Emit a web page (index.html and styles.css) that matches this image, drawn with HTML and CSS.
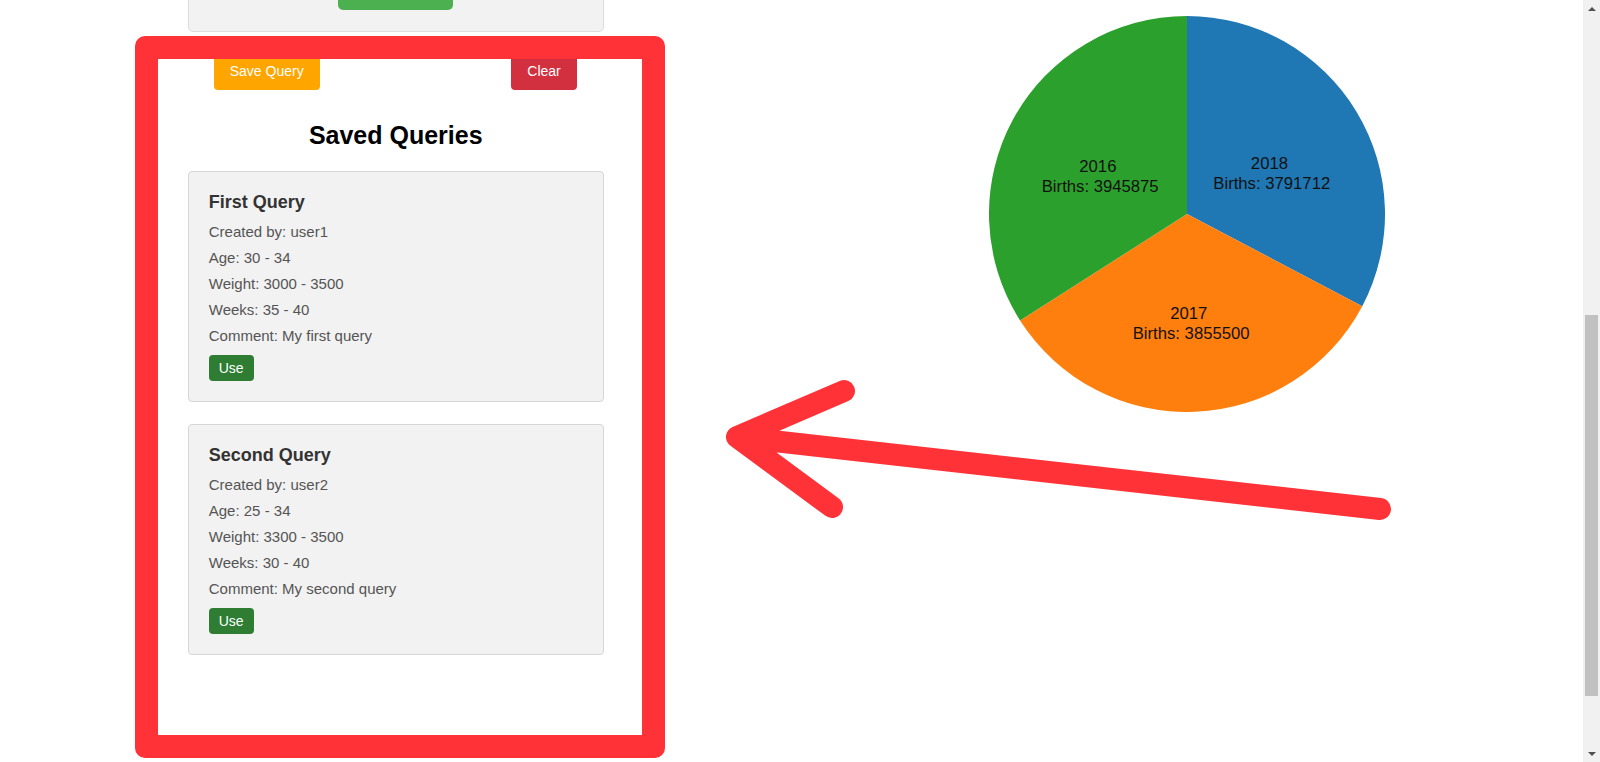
FILE: index.html
```html
<!DOCTYPE html>
<html lang="en">
<head>
<meta charset="utf-8">
<title>Saved Queries</title>
<link rel="stylesheet" href="styles.css">
</head>
<body>
  <div class="page">
    <div class="columns">
      <section class="left-col">
        <div class="panel">
          <div class="form-card">
            <button class="btn btn-submit" aria-label="Search"></button>
          </div>

          <div class="actions">
            <button class="btn btn-save">Save Query</button>
            <button class="btn btn-clear">Clear</button>
          </div>

          <h2 class="saved-title">Saved Queries</h2>

          <div class="query-card">
            <h3 class="query-name">First Query</h3>
            <p class="query-line">Created by: user1</p>
            <p class="query-line">Age: 30 - 34</p>
            <p class="query-line">Weight: 3000 - 3500</p>
            <p class="query-line">Weeks: 35 - 40</p>
            <p class="query-line">Comment: My first query</p>
            <button class="btn btn-use">Use</button>
          </div>

          <div class="query-card">
            <h3 class="query-name">Second Query</h3>
            <p class="query-line">Created by: user2</p>
            <p class="query-line">Age: 25 - 34</p>
            <p class="query-line">Weight: 3300 - 3500</p>
            <p class="query-line">Weeks: 30 - 40</p>
            <p class="query-line">Comment: My second query</p>
            <button class="btn btn-use">Use</button>
          </div>
        </div>
      </section>

      <section class="right-col">
        <svg class="pie" width="396" height="396" viewBox="0 0 396 396">
          <path d="M198,198 L198,0 A198,198 0 0,1 373.24,290.17 Z" fill="#1f77b4"/>
          <path d="M198,198 L373.24,290.17 A198,198 0 0,1 31.06,304.48 Z" fill="#ff7f0e"/>
          <path d="M198,198 L31.06,304.48 A198,198 0 0,1 198,0 Z" fill="#2ca02c"/>
          <text class="pie-label" x="282.75" y="146.82">
            <tspan x="282.75" dy="0.35em">2018</tspan>
            <tspan x="282.75" dy="1.2em">Births: 3791712</tspan>
          </text>
          <text class="pie-label" x="202.13" y="296.91">
            <tspan x="202.13" dy="0.35em">2017</tspan>
            <tspan x="202.13" dy="1.2em">Births: 3855500</tspan>
          </text>
          <text class="pie-label" x="111.19" y="150.4">
            <tspan x="111.19" dy="0.35em">2016</tspan>
            <tspan x="111.19" dy="1.2em">Births: 3945875</tspan>
          </text>
        </svg>
      </section>
    </div>

    <div class="highlight-frame"></div>

    <svg class="annotation" width="1583" height="762" viewBox="0 0 1583 762">
      <path d="M844,391 L737,437 L832,507 M737,437 L1380,509" fill="none" stroke="#ff3237" stroke-width="22" stroke-linecap="round" stroke-linejoin="round"/>
    </svg>
  </div>

  <div class="scrollbar">
    <div class="sb-btn"><span class="sb-arrow-up"></span></div>
    <div class="sb-track">
      <div class="sb-thumb"></div>
    </div>
    <div class="sb-btn"><span class="sb-arrow-down"></span></div>
  </div>
</body>
</html>
```

FILE: styles.css
```css
* {
  box-sizing: border-box;
}

html, body {
  margin: 0;
  padding: 0;
  height: 762px;
  overflow: hidden;
  background: #ffffff;
  font-family: "Liberation Sans", Arial, sans-serif;
}

body {
  display: flex;
}

.page {
  position: relative;
  flex: 1;
  height: 762px;
  overflow: hidden;
}

.columns {
  display: grid;
  grid-template-columns: 1fr 1fr;
  height: 100%;
}

.left-col {
  display: flex;
  justify-content: center;
}

.panel {
  width: 416px;
}

.form-card {
  margin-top: -49px;
  padding: 20px 20px 21px;
  background: #f2f2f2;
  border: 1px solid #dcdcdc;
  border-radius: 5px;
  display: flex;
  justify-content: center;
}

.btn {
  font-family: "Liberation Sans", Arial, sans-serif;
  font-size: 14px;
  line-height: 16px;
  color: #ffffff;
  border: none;
  border-radius: 4px;
  cursor: pointer;
}

.btn-submit {
  width: 115px;
  height: 38px;
  background: #4caf50;
  border-radius: 5px;
}

.actions {
  margin-top: 20px;
  padding: 0 27px 0 26px;
  display: flex;
  justify-content: space-between;
}

.btn-save,
.btn-clear {
  padding: 11px 16px;
}

.btn-save {
  background: #ffa500;
}

.btn-clear {
  background: #d3303f;
}

.saved-title {
  margin: 32px 0 23px;
  font-size: 25px;
  line-height: 26px;
  font-weight: bold;
  color: #000000;
  text-align: center;
}

.query-card {
  background: #f2f2f2;
  border: 1px solid #d6d6d6;
  border-radius: 4px;
  padding: 20px;
  margin-bottom: 22px;
}

.query-name {
  margin: 0 0 6px;
  font-size: 18px;
  line-height: 21px;
  font-weight: bold;
  color: #333333;
}

.query-line {
  margin: 0;
  font-size: 15px;
  line-height: 26px;
  color: #555555;
}

.btn-use {
  display: block;
  margin-top: 6px;
  padding: 5px 10px;
  background: #2e7d32;
}

.right-col {
  display: flex;
  justify-content: center;
  align-items: flex-start;
}

.pie {
  display: block;
  margin-top: 16px;
}

.pie-label {
  font-family: "Liberation Sans", Arial, sans-serif;
  font-size: 16.7px;
  fill: #111111;
  text-anchor: middle;
}

.highlight-frame {
  position: absolute;
  left: 135px;
  top: 36px;
  width: 530px;
  height: 722px;
  border: 23px solid #ff3237;
  border-radius: 10px;
  pointer-events: none;
}

.annotation {
  position: absolute;
  left: 0;
  top: 0;
  pointer-events: none;
}

.scrollbar {
  width: 17px;
  height: 762px;
  background: #f1f1f1;
  display: flex;
  flex-direction: column;
}

.sb-btn {
  height: 17px;
  display: flex;
  align-items: center;
  justify-content: center;
}

.sb-arrow-up {
  width: 0;
  height: 0;
  border-left: 4px solid transparent;
  border-right: 4px solid transparent;
  border-bottom: 4px solid #505050;
}

.sb-arrow-down {
  width: 0;
  height: 0;
  border-left: 4px solid transparent;
  border-right: 4px solid transparent;
  border-top: 4px solid #505050;
}

.sb-track {
  flex: 1;
  padding: 0 2px;
}

.sb-thumb {
  margin-top: 298px;
  height: 381px;
  background: #c1c1c1;
}
```
